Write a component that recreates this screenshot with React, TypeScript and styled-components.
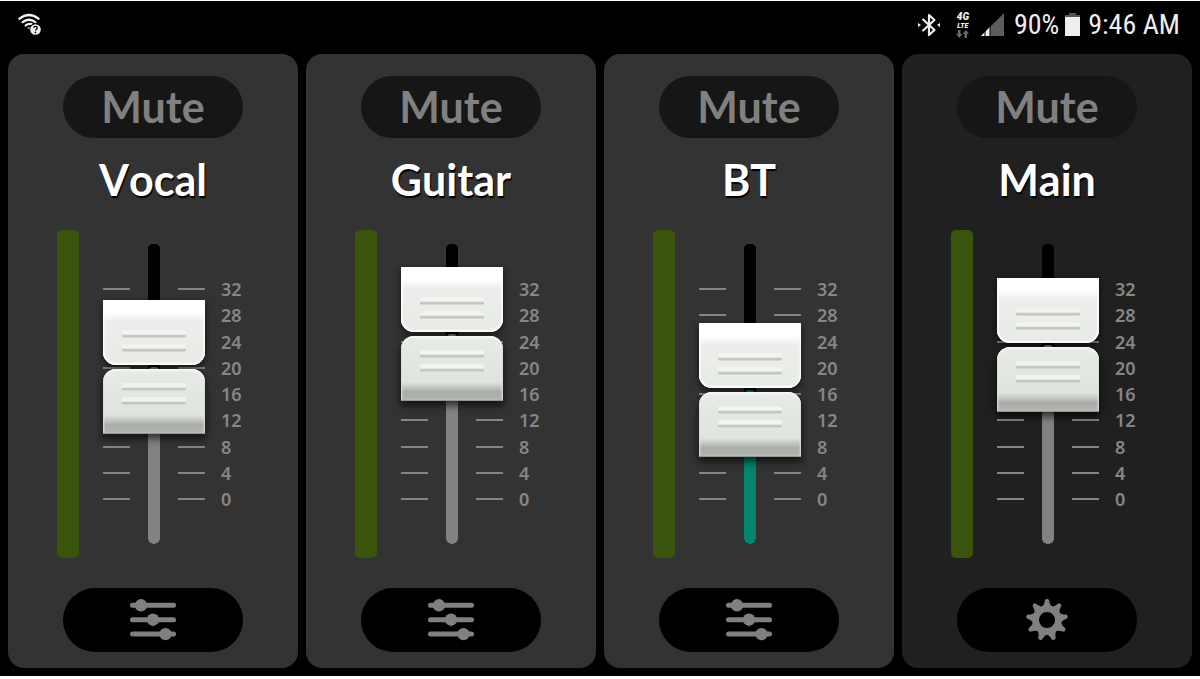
import React, { useId, useState } from "react";
import styled, { createGlobalStyle, css } from "styled-components";

const GlobalStyle = createGlobalStyle`
  * { box-sizing: border-box; }
  html, body { margin: 0; background: #fff; }
  body { font-family: Lato, "Noto Sans", sans-serif; }
  #root { padding: 1px 0 3px; min-height: 100vh; display: flex; }
`;

const Screen = styled.div`
  flex: 1;
  display: flex;
  flex-direction: column;
  background: #000;
  padding: 0 8px 8px;
`;

const StatusBar = styled.header`
  display: flex;
  align-items: center;
  justify-content: space-between;
  height: 53px;
  padding: 0 12px 6px 10px;
  color: #eee;
`;

const StatusGroup = styled.div`
  display: flex;
  align-items: center;
`;

const StatusText = styled.span`
  font: 400 28px/32px "Roboto Condensed", Roboto, sans-serif;
`;

const Mixer = styled.main`
  flex: 1;
  display: grid;
  grid-template-columns: repeat(4, 1fr);
  gap: 8px;
`;

const Channel = styled.section<{ $master?: boolean }>`
  display: flex;
  flex-direction: column;
  align-items: center;
  padding: 22px 0 16px;
  border-radius: 16px;
  background: ${(p) => (p.$master ? "#202020" : "#333")};
`;

const PillButton = styled.button`
  display: flex;
  align-items: center;
  justify-content: center;
  width: 180px;
  padding: 0;
  border: 0;
  border-radius: 32px;
  color: #808080;
  cursor: pointer;
`;

const MuteButton = styled(PillButton)`
  height: 62px;
  background: #161616;
  font: 700 43px/62px Lato, "Noto Sans", sans-serif;
`;

const SettingsButton = styled(PillButton)`
  height: 64px;
  margin-top: auto;
  background: #000;
`;

const ChannelName = styled.h2`
  margin: 12px 0 20px;
  color: #fff;
  font: 700 43px/60px Lato, "Noto Sans", sans-serif;
  font-kerning: none;
  text-shadow: 1px 2px 1px #000;
`;

const Controls = styled.div`
  display: flex;
  align-items: center;
  width: 192px;
  height: 328px;
  gap: 24px;
`;

const Meter = styled.div`
  width: 22px;
  height: 328px;
  border-radius: 5px;
  background: #3a540b;
`;

const Fader = styled.div`
  position: relative;
  display: flex;
  align-items: center;
  justify-content: space-between;
  width: 102px;
  height: 300px;
`;

const Ticks = styled.div`
  display: flex;
  flex-direction: column;
  justify-content: space-between;
  width: 27px;
  height: 212px;
`;

const Tick = styled.i`
  height: 2px;
  background: #858585;
`;

const Track = styled.div`
  display: flex;
  flex-direction: column;
  justify-content: flex-end;
  width: 12px;
  height: 300px;
  border-radius: 5px;
  background: #000;
  overflow: hidden;
`;

const Fill = styled.div<{ $linked?: boolean }>`
  border-radius: 5px;
  background: ${(p) => (p.$linked ? "#00866a" : "#828282")};
`;

const Cap = styled.div`
  position: absolute;
  left: 0;
  display: flex;
  flex-direction: column;
  gap: 4px;
  width: 102px;
  transform: translateY(50%);
  pointer-events: none;
`;

const upper = css`
  justify-content: flex-end;
  padding-bottom: 13px;
  border-radius: 1px 1px 13px 13px;
  background: linear-gradient(#fff 0, #fff 12px, #eceeeb 22px, #e7ebe5 100%);
  box-shadow: inset 0 0 3px 1px #fff, inset 0 -1px 1px 1px #f8f8f8,
    0 3px 6px 1px rgba(0, 0, 0, 0.5);
`;

const lower = css`
  padding-top: 14px;
  border-radius: 13px 13px 1px 1px;
  background: linear-gradient(#e7ebe6 0, #dfe4de 46px, #aaada7 56px, #b2b5b0 100%);
  box-shadow: inset 0 -1px 1px 0 #8d8f8b, inset 0 2px 2px 0 #f8f8f8,
    inset 0 0 2px 1px #dfe1dd, 0 4px 7px 1px rgba(0, 0, 0, 0.6);
`;

const CapHalf = styled.div<{ $part: "upper" | "lower" }>`
  display: flex;
  flex-direction: column;
  align-items: center;
  gap: 6px;
  height: 65px;
  ${(p) => (p.$part === "upper" ? upper : lower)}
`;

const Groove = styled.i`
  width: 64px;
  height: 8px;
  border-radius: 2px;
  background: linear-gradient(#f1f3f0 0, #f3f4f2 4px, #b9bcb6 6px, #dde0db 100%);
`;

const Range = styled.input`
  position: absolute;
  inset: 0;
  width: 100%;
  height: 100%;
  margin: 0;
  opacity: 0;
  writing-mode: vertical-lr;
  direction: rtl;
  cursor: grab;
`;

const Scale = styled.ol`
  display: flex;
  flex-direction: column;
  justify-content: space-between;
  height: 234px;
  margin: 0 0 0 -8px;
  padding: 0;
  list-style: none;
  color: #868686;
  font: 600 18px/24px "Noto Sans", "Open Sans", sans-serif;
`;

const marks = [32, 28, 24, 20, 16, 12, 8, 4, 0];

type ChannelData = { name: string; level: number; linked?: boolean; master?: boolean };

const channels: ChannelData[] = [
  { name: "Vocal", level: 59 },
  { name: "Guitar", level: 70 },
  { name: "BT", level: 51.5, linked: true },
  { name: "Main", level: 66.5, master: true },
];

const SlidersIcon = () => (
  <svg width="46" height="42" viewBox="0 0 46 42" fill="currentColor" aria-hidden="true">
    <rect y="3.8" width="46" height="5" rx="2.5" />
    <rect y="18.2" width="46" height="5" rx="2.5" />
    <rect y="32.6" width="46" height="5" rx="2.5" />
    <circle cx="11" cy="6.3" r="6.2" />
    <circle cx="23" cy="20.7" r="6.2" />
    <circle cx="35.5" cy="35.1" r="6.2" />
  </svg>
);

const toothAngles = Array.from({ length: 9 }, (_, i) => i * 40);

const GearIcon = () => (
  <svg width="42" height="42" viewBox="-21 -21 42 42" fill="currentColor" aria-hidden="true">
    <circle r="11.3" fill="none" stroke="currentColor" strokeWidth="6.6" />
    {toothAngles.map((a) => (
      <path
        key={a}
        transform={`rotate(${a})`}
        d="M-5.6 -13C-3.5 -14.5 -2.7 -16.5 -2.1 -19.6Q-1.8 -21 0 -21Q1.8 -21 2.1 -19.6C2.7 -16.5 3.5 -14.5 5.6 -13Z"
      />
    ))}
  </svg>
);

const WifiIcon = () => (
  <svg width="24" height="24" viewBox="0 0 24 24" fill="none" role="img" aria-label="Wi-Fi">
    <g stroke="#f2f2f2" strokeWidth="2.3" strokeLinecap="round">
      <path d="M1.5 5.7Q11 -1.6 20.5 5.7" />
      <path d="M4.6 9.1Q11 4.3 17.4 9.1" />
      <path d="M7.7 12.3Q10.5 10.2 13.5 11" />
    </g>
    <path d="M9.5 14.5L12 14V17Z" fill="#f2f2f2" />
    <circle cx="17.5" cy="16.5" r="6.3" fill="#000" />
    <circle cx="17.5" cy="16.5" r="5.3" fill="#f2f2f2" />
    <path d="M15.7 15Q15.8 13.3 17.5 13.3T19.3 15C19.3 16.2 17.5 16.3 17.5 17.6" stroke="#000" strokeWidth="1.3" />
    <circle cx="17.5" cy="19.4" r="0.9" fill="#000" />
  </svg>
);

const BluetoothIcon = () => (
  <svg width="22" height="24" viewBox="0 0 22 24" fill="none" role="img" aria-label="Bluetooth">
    <path d="M4.5 6L16.5 17L11 22V2L16.5 7L4.5 18" stroke="#eee" strokeWidth="2.2" strokeLinejoin="round" />
    <path d="M0 10L3 12L0 14ZM22 10L19 12L22 14Z" fill="#eee" />
  </svg>
);

const NetworkBadge = styled.span`
  display: flex;
  flex-direction: column;
  align-items: center;
  width: 16px;
  margin: 0 10px 0 15px;
  color: #eee;
`;

const NetworkType = styled.span`
  font: italic 900 10px/10px Roboto, sans-serif;
`;

const NetworkSub = styled.span`
  font: italic 900 7px/8px Roboto, sans-serif;
`;

const DataArrows = () => (
  <svg width="13" height="8" viewBox="0 0 13 8" fill="#686868" aria-hidden="true">
    <path d="M2 0H4.5V4H6.5L3.25 8L0 4H2Z" />
    <path d="M8.5 8H11V4H13L9.75 0L6.5 4H8.5Z" />
  </svg>
);

const SignalIcon = styled.svg`
  margin-right: 10px;
`;

const BatteryIcon = styled.svg`
  margin: 0 8px 0 6px;
`;

function ChannelStrip({ name, level, linked, master }: ChannelData) {
  const [value, setValue] = useState(level);
  const [muted, setMuted] = useState(false);
  const id = useId();
  return (
    <Channel $master={master} aria-labelledby={id}>
      <MuteButton type="button" aria-pressed={muted} onClick={() => setMuted(!muted)}>
        Mute
      </MuteButton>
      <ChannelName id={id}>{name}</ChannelName>
      <Controls>
        <Meter />
        <Fader>
          <Ticks>{marks.map((m) => <Tick key={m} />)}</Ticks>
          <Track>
            <Fill $linked={linked} style={{ height: `${value}%` }} />
          </Track>
          <Ticks>{marks.map((m) => <Tick key={m} />)}</Ticks>
          <Cap style={{ bottom: `${value}%` }}>
            <CapHalf $part="upper"><Groove /><Groove /></CapHalf>
            <CapHalf $part="lower"><Groove /><Groove /></CapHalf>
          </Cap>
          <Range
            type="range"
            min={0}
            max={100}
            step={0.5}
            value={value}
            aria-labelledby={id}
            onChange={(e) => setValue(Number(e.target.value))}
          />
        </Fader>
        <Scale>{marks.map((m) => <li key={m}>{m}</li>)}</Scale>
      </Controls>
      <SettingsButton type="button" aria-label={`${name} settings`}>
        {master ? <GearIcon /> : <SlidersIcon />}
      </SettingsButton>
    </Channel>
  );
}

export default function App() {
  return (
    <>
      <GlobalStyle />
      <Screen>
        <StatusBar>
          <WifiIcon />
          <StatusGroup>
            <BluetoothIcon />
            <NetworkBadge>
              <NetworkType>4G</NetworkType>
              <NetworkSub>LTE</NetworkSub>
              <DataArrows />
            </NetworkBadge>
            <SignalIcon width="23" height="23" viewBox="0 0 23 23" role="img" aria-label="Signal">
              <path d="M0 23L23 0V23Z" fill="#5c5c5c" />
              <path d="M0 23L9 14V23Z" fill="#eee" />
              <path d="M4 17V23M9 12V23" stroke="#000" />
            </SignalIcon>
            <StatusText>90%</StatusText>
            <BatteryIcon width="15" height="23" viewBox="0 0 15 23" role="img" aria-label="Battery">
              <path d="M4 0H11V2H15V4H0V2H4Z" fill="#555" />
              <path d="M0 4H15V23H0Z" fill="#eee" />
            </BatteryIcon>
            <StatusText>9:46 AM</StatusText>
          </StatusGroup>
        </StatusBar>
        <Mixer>
          {channels.map((c) => (
            <ChannelStrip key={c.name} {...c} />
          ))}
        </Mixer>
      </Screen>
    </>
  );
}
